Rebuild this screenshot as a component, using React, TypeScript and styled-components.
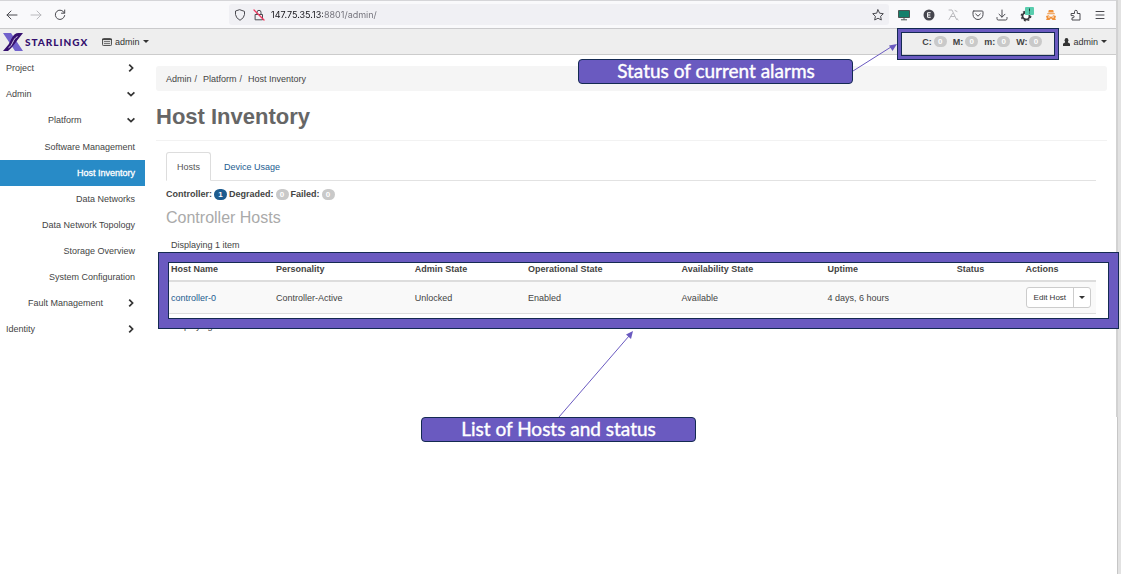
import React from "react";
import styled, { createGlobalStyle, css } from "styled-components";

const color = {
  purple: "#6a5ac0",
  navy: "#142a52",
  text: "#444",
  link: "#1d5c8f",
  active: "#288bc7",
};

const GlobalStyle = createGlobalStyle`
  *, *::before, *::after { box-sizing: border-box; }
  body {
    margin: 0;
    background: #fff;
    color: ${color.text};
    font: 9px/14px "Liberation Sans", Arial, sans-serif;
  }
  button, input { font: inherit; color: inherit; }
  button { cursor: pointer; }
  a { color: inherit; text-decoration: none; }
  ul, ol { list-style: none; margin: 0; padding: 0; }
  svg { display: block; }
`;

const Shell = styled.div`
  display: flex;
  min-height: 100vh;
`;

const BrowserWindow = styled.div`
  flex: 1;
  min-width: 0;
`;

const WindowEdge = styled.div`
  position: relative;
  width: 4px;
  background: #e2e2e2;
  border-left: 1px solid #c6c6c6;
`;

const EdgeShade = styled.div`
  position: absolute;
  top: 0;
  left: -2px;
  width: 2px;
  height: 417px;
  background: #d2d2d2;
`;

const BrowserBar = styled.div`
  display: flex;
  align-items: center;
  height: 29px;
  padding: 0 10px 0 5px;
  background: #f9f9fb;
  border-top: 1px solid #d5d5d8;
  border-bottom: 1px solid #cacacc;
`;

const NavButtons = styled.div`
  display: flex;
  gap: 10px;
  width: 224px;
`;

const IconButton = styled.button<{ $dim?: boolean }>`
  display: flex;
  align-items: center;
  justify-content: center;
  width: 14px;
  height: 16px;
  padding: 0;
  border: 0;
  background: none;
  color: ${(p) => (p.$dim ? "#b9b9bd" : "#4a4a50")};
`;

const AddressBar = styled.div`
  display: flex;
  flex: 1;
  align-items: center;
  gap: 5px;
  height: 21px;
  padding: 0 4px;
  background: #f0f0f4;
  border-radius: 3px;
  color: #4a4a50;
`;

const Address = styled.input`
  flex: 1;
  min-width: 0;
  padding: 0;
  border: 0;
  outline: 0;
  background: linear-gradient(90deg, #15141a 52px, #6f6e77 52px);
  background-clip: text;
  -webkit-background-clip: text;
  -webkit-text-fill-color: transparent;
  color: #2b2a33;
  font: 9px/14px Inter, sans-serif;
`;

const Extensions = styled.div`
  display: flex;
  justify-content: space-between;
  width: 210px;
  margin-left: 8px;
`;

const TopNav = styled.header`
  display: flex;
  align-items: center;
  height: 26px;
  padding: 0 10px 0 3px;
  background: #eee;
  border-bottom: 1px solid #ccc;
`;

const Brand = styled.a`
  display: flex;
  align-items: center;
  gap: 2px;
  width: 99px;
  color: #34106e;
  font: 900 10px/14px Lato, sans-serif;
  letter-spacing: 1px;
`;

const MenuButton = styled.button`
  display: flex;
  align-items: center;
  gap: 3px;
  padding: 0;
  border: 0;
  background: none;
  color: #333;
`;

const Caret = styled.span`
  border: 3px solid transparent;
  border-top-color: currentColor;
  border-bottom: 0;
`;

const Alarms = styled.div`
  position: relative;
  display: flex;
  align-items: center;
  gap: 6px;
  height: 24px;
  margin-left: auto;
  margin-right: 4px;
  padding: 0 17px 0 25px;
`;

const Counter = styled.span`
  display: flex;
  align-items: center;
  gap: 2px;
  font-weight: bold;
`;

const Badge = styled.span<{ $on?: boolean }>`
  min-width: 13px;
  height: 11px;
  border-radius: 6px;
  background: ${(p) => (p.$on ? color.link : "#c9c9c9")};
  color: #fff;
  font-size: 8px;
  font-weight: bold;
  line-height: 11px;
  text-align: center;
`;

const frame = css`
  position: absolute;
  z-index: 2;
  pointer-events: none;
  border: 1px solid ${color.navy};
`;

const AlarmFrame = styled.div`
  ${frame}
  inset: -2px 0 -6px;
  box-shadow: inset 0 0 0 3px ${color.purple}, inset 0 0 0 4px ${color.navy};
`;

const HostFrame = styled.div`
  ${frame}
  inset: -6px -23px -15px -8px;
  box-shadow: inset 0 0 0 9px ${color.purple}, inset 0 0 0 10px ${color.navy};
`;

const Callout = styled.div`
  position: absolute;
  z-index: 3;
  width: 275px;
  height: 25px;
  border: 1px solid ${color.navy};
  border-radius: 4px;
  background: ${color.purple};
  color: #fff;
  font: 19px/21px Lato, sans-serif;
  -webkit-text-stroke: 0.4px #fff;
  text-align: center;
  white-space: nowrap;
`;

const AlarmCallout = styled(Callout)`
  top: 29px;
  right: 206px;
`;

const HostCallout = styled(Callout)`
  top: 159px;
  left: 255px;
`;

const AlarmArrow = styled.svg`
  position: absolute;
  z-index: 3;
  top: 12px;
  right: 162px;
`;

const HostArrow = styled.svg`
  position: absolute;
  z-index: 3;
  top: 71px;
  left: 392px;
`;

const Body = styled.div`
  display: flex;
  align-items: flex-start;
`;

const Sidebar = styled.nav`
  width: 145px;
  flex: none;
`;

const Group = styled.button<{ $indent: number }>`
  display: flex;
  align-items: center;
  justify-content: space-between;
  width: 100%;
  height: 26px;
  padding: 0 10px 0 ${(p) => p.$indent}px;
  border: 0;
  background: none;
  text-align: left;
`;

const Leaves = styled.ul`
  padding-top: 1px;
`;

const Leaf = styled.a<{ $active?: boolean }>`
  display: block;
  padding: 0 10px;
  line-height: 26px;
  text-align: right;
  ${(p) =>
    p.$active &&
    css`
      background: ${color.active};
      color: #fff;
      -webkit-text-stroke: 0.3px #fff;
    `}
`;

const Main = styled.main`
  flex: 1;
  min-width: 0;
  padding: 11px 10px 0 11px;
`;

const Breadcrumb = styled.ol`
  display: flex;
  gap: 5px;
  padding: 0 10px;
  border-radius: 3px;
  background: #f5f5f5;
  line-height: 26px;
  height: 25px;

  li + li::before {
    content: "/";
    margin-left: -2px;
    margin-right: 6px;
  }
`;

const Title = styled.h1`
  margin: 0;
  padding-top: 2px;
  border-bottom: 1px solid #f2f2f2;
  color: #666;
  font-size: 22px;
  font-weight: bold;
  line-height: 47px;
`;

const Content = styled.section`
  padding: 11px 11px 0 10px;
`;

const Tabs = styled.div`
  display: flex;
  gap: 2px;
  border-bottom: 1px solid #e2e2e2;
`;

const Tab = styled.button<{ $active?: boolean }>`
  height: 29px;
  margin-bottom: -1px;
  padding: 0 10px;
  border: 1px solid transparent;
  border-radius: 3px 3px 0 0;
  background: none;
  color: ${color.link};
  ${(p) =>
    p.$active &&
    css`
      border-color: #ddd #ddd #fff;
      background: #fff;
      color: #555;
    `}
`;

const Summary = styled.div`
  display: flex;
  align-items: center;
  gap: 2px;
  height: 26px;
`;

const Subtitle = styled.h2`
  margin: 0;
  color: #aaa;
  font-size: 16px;
  font-weight: normal;
  line-height: 22px;
`;

const ItemCount = styled.p`
  margin: 9px 5px 6px;
`;

const TableArea = styled.div`
  position: relative;
`;

const HostTable = styled.table`
  width: 100%;
  border-spacing: 0;
  table-layout: fixed;

  th, td {
    padding: 0 5px;
    text-align: left;
    white-space: nowrap;
  }
  th {
    height: 24px;
    border-bottom: 2px solid #ddd;
    font-weight: bold;
  }
  td {
    height: 32px;
    border-bottom: 1px solid #ddd;
    background: #f9f9f9;
  }
  td a { color: ${color.link}; }
`;

const TableFooter = styled.p`
  margin: 5px 5px 0;
`;

const Split = styled.div`
  display: inline-flex;
  height: 21px;
  border: 1px solid #ccc;
  border-radius: 3px;
  background: #fff;
  color: #333;
`;

const SplitPart = styled.button`
  display: flex;
  align-items: center;
  padding: 0 6px;
  border: 0;
  background: none;
  font-size: 8px;

  & + & {
    padding: 0 5px;
    border-left: 1px solid #ccc;
  }
`;

const EditButton = styled(SplitPart)`
  padding: 0 7px;
`;

const MoreButton = styled(SplitPart)`
  padding: 0 5px;
  border-left: 1px solid #ccc;
`;

const Stroke = ({ children, size = 12 }: { children: React.ReactNode; size?: number }) => (
  <svg
    width={size}
    height={size}
    viewBox="0 0 12 12"
    fill="none"
    stroke="currentColor"
    strokeLinecap="round"
    strokeLinejoin="round"
    strokeWidth="1"
    aria-hidden="true"
  >
    {children}
  </svg>
);

const Chevron = ({ open }: { open: boolean }) => (
  <svg width="8" height="8" viewBox="0 0 8 8" fill="none" stroke="#333" strokeWidth="1.7" aria-hidden="true">
    <path d={open ? "M.6 2.3 4 5.6 7.4 2.3" : "M2.2.6 5.6 4 2.2 7.4"} />
  </svg>
);

const Logo = () => (
  <svg width="20" height="18" viewBox="0 0 20 18" aria-hidden="true">
    <path d="M0 0h8l12 18h-8z" fill="#7161cc" />
    <path d="M0 18 5.500 11.500C8 8 9.500 0 15.500 0H20l-5.300 6.800C11.500 11 9.500 14.500 5 18z" fill="#35106f" />
    <path d="M5.500 14.800C10 12.500 9.500 5.800 14.500 3.600" fill="none" stroke="#e7e1f5" strokeWidth=".9" />
  </svg>
);

const ListIcon = () => (
  <svg width="10" height="8" viewBox="0 0 10 8" aria-hidden="true">
    <rect x=".5" y=".5" width="9" height="7" rx=".8" fill="#ddd" stroke="#555" />
    <path d="M0 1.500h10" stroke="#444" />
    <path d="M2 3.500h6M2 5.500h6" stroke="#777" />
  </svg>
);

const UserIcon = () => (
  <svg width="7" height="8" viewBox="0 0 7 8" fill="#333" aria-hidden="true">
    <ellipse cx="3.500" cy="2.200" rx="1.900" ry="2.200" />
    <path d="M2.200 4h2.600l.2.500 1.500.8q.5.300.5 1V8H0V6.300q0-.7.5-1l1.500-.8z" />
  </svg>
);

const extensions: { name: string; icon: React.ReactNode; dim?: boolean }[] = [
  {
    name: "Remote screen",
    icon: (
      <svg width="12" height="12" viewBox="0 0 12 12">
        <path d="M.5 1.500h11v7H.5z" fill="#14806b" stroke="#4b5553" />
        <path d="M6 8.500v2M3 10.800h6" stroke="#4b5553" />
      </svg>
    ),
  },
  {
    name: "Account",
    icon: (
      <svg width="12" height="12" viewBox="0 0 12 12">
        <circle cx="6" cy="6" r="5.500" fill="#46464e" />
        <path d="M7.700 3.700H4.600v4.600h3.100M4.600 6h2.700" fill="none" stroke="#fff" />
      </svg>
    ),
  },
  {
    name: "Reader",
    dim: true,
    icon: <Stroke><path d="M2 1h3l4.500 9.500M5.500 4.500 2 10.500M3.500 7.500h4M8 1.500l2 1M10 9.500l1 1.500" /></Stroke>,
  },
  {
    name: "Pocket",
    icon: <Stroke><path d="M1.800 2h8.400q.8 0 .8.800V5.500a5 5 0 0 1-10 0V2.800q0-.8.8-.8zM3.700 5 6 7.200 8.300 5" /></Stroke>,
  },
  { name: "Downloads", icon: <Stroke><path d="M6 1v7M3 5.200l3 3 3-3M1 8.500v1.200q0 1.300 1.300 1.300h7.400Q11 11 11 9.700V8.500" /></Stroke> },
  {
    name: "Settings extension",
    icon: (
      <svg width="14" height="16" viewBox="0 0 14 16">
        <circle cx="6" cy="9" r="3.500" fill="#fff" stroke="#38383d" strokeWidth="1.800" />
        <circle cx="6" cy="9" r="4.800" fill="none" stroke="#38383d" strokeWidth="1.200" strokeDasharray="2 1.770" />
        <rect x="5" y="0" width="9" height="8" rx="1" fill="#59cdae" />
        <path d="M9.500 1.500v3M9.500 5.500v1" stroke="#1c493e" />
      </svg>
    ),
  },
  {
    name: "Fox extension",
    icon: (
      <svg width="12" height="12" viewBox="0 0 12 12">
        <path d="M3.800 1h4.400l.6 2.500H3.200zM2.200 4.200h7.600v1H2.200zM1 7l2.500-.8L6 8l2.500-1.800L11 7l-.8 2.500.8 1.500H7.500L6 9.300 4.500 11H1l.8-1.500z" fill="#f0913a" />
        <circle cx="4" cy="8" r=".8" fill="#fff" />
        <circle cx="8" cy="8" r=".8" fill="#fff" />
      </svg>
    ),
  },
  {
    name: "Extensions",
    icon: <Stroke><path d="M1.500 4.500h3V2.700a1.400 1.400 0 0 1 2.800 0v1.800H10v6.500H2V8.800h1a1.100 1.100 0 0 0 0-2.200H1.500z" /></Stroke>,
  },
  { name: "Menu", icon: <Stroke><path d="M2 2.500h8M2 6h8M2 9.500h8" /></Stroke> },
];

const Count = ({ label, value, on }: { label: string; value: number; on?: boolean }) => (
  <Counter>
    {label} <Badge $on={on}>{value}</Badge>
  </Counter>
);

const columns: [string, string][] = [
  ["Host Name", "11.3%"],
  ["Personality", "14.9%"],
  ["Admin State", "12.2%"],
  ["Operational State", "16.5%"],
  ["Availability State", "15.7%"],
  ["Uptime", "13.9%"],
  ["Status", "7.4%"],
  ["Actions", "8.1%"],
];

const leaves = [
  "Software Management",
  "Host Inventory",
  "Data Networks",
  "Data Network Topology",
  "Storage Overview",
  "System Configuration",
];

export default function App() {
  return (
    <>
      <GlobalStyle />
      <Shell>
        <BrowserWindow>
          <BrowserBar>
            <NavButtons>
              <IconButton aria-label="Back"><Stroke><path d="M1 6h10M5 2 1 6l4 4" /></Stroke></IconButton>
              <IconButton aria-label="Forward" $dim><Stroke><path d="M1 6h10M7 2l4 4-4 4" /></Stroke></IconButton>
              <IconButton aria-label="Reload"><Stroke><path d="M10.400 4A4.700 4.700 0 1 0 10.700 6.500M10.700 1v3.200H7.500" /></Stroke></IconButton>
            </NavButtons>
            <AddressBar>
              <IconButton aria-label="Tracking protection">
                <Stroke><path d="M6 .8 10.500 2.400V5.500Q10.200 9 6 11.300 1.800 9 1.500 5.500V2.400z" /></Stroke>
              </IconButton>
              <IconButton aria-label="Connection not secure">
                <Stroke>
                  <path d="M2.500 5.500h7v5.300h-7zM4 5.500V3.300a2 2 0 0 1 4 0v2.200" />
                  <path d="m1 1 10 10" stroke="#f0385f" strokeWidth="1.300" />
                </Stroke>
              </IconButton>
              <Address aria-label="Address" defaultValue="147.75.35.13:8801/admin/" />
              <IconButton aria-label="Bookmark">
                <Stroke><path d="m6 .8 1.600 3.400 3.700.5-2.700 2.600.7 3.700L6 9.200 2.700 11l.7-3.700L.7 4.700l3.700-.5z" /></Stroke>
              </IconButton>
            </AddressBar>
            <Extensions>
              {extensions.map((e) => (
                <IconButton key={e.name} aria-label={e.name} $dim={e.dim}>{e.icon}</IconButton>
              ))}
            </Extensions>
          </BrowserBar>

          <TopNav>
            <Brand href="#"><Logo />STARLINGX</Brand>
            <MenuButton><ListIcon />admin<Caret /></MenuButton>
            <Alarms>
              <Count label="C:" value={0} />
              <Count label="M:" value={0} />
              <Count label="m:" value={0} />
              <Count label="W:" value={0} />
              <AlarmFrame />
              <AlarmCallout>Status of current alarms</AlarmCallout>
              <AlarmArrow width="44" height="32" viewBox="0 0 44 32" aria-hidden="true">
                <path d="M0 29 38 5" stroke={color.purple} strokeWidth="1" />
                <path d="m44 2-4.500 7-3.500-5.500z" fill={color.purple} />
              </AlarmArrow>
            </Alarms>
            <MenuButton><UserIcon />admin<Caret /></MenuButton>
          </TopNav>

          <Body>
            <Sidebar>
              <Group $indent={6}>Project<Chevron open={false} /></Group>
              <Group $indent={6}>Admin<Chevron open /></Group>
              <Group $indent={48}>Platform<Chevron open /></Group>
              <Leaves>
                {leaves.map((leaf) => (
                  <li key={leaf}>
                    <Leaf href="#" $active={leaf === "Host Inventory"}>{leaf}</Leaf>
                  </li>
                ))}
              </Leaves>
              <Group $indent={28}>Fault Management<Chevron open={false} /></Group>
              <Group $indent={6}>Identity<Chevron open={false} /></Group>
            </Sidebar>

            <Main>
              <Breadcrumb>
                <li><a href="#">Admin</a></li>
                <li><a href="#">Platform</a></li>
                <li>Host Inventory</li>
              </Breadcrumb>
              <Title>Host Inventory</Title>
              <Content>
                <Tabs role="tablist">
                  <Tab role="tab" aria-selected="true" $active>Hosts</Tab>
                  <Tab role="tab" aria-selected="false">Device Usage</Tab>
                </Tabs>
                <Summary>
                  <Count label="Controller:" value={1} on />
                  <Count label="Degraded:" value={0} />
                  <Count label="Failed:" value={0} />
                </Summary>
                <Subtitle>Controller Hosts</Subtitle>
                <ItemCount>Displaying 1 item</ItemCount>
                <TableArea>
                  <HostTable>
                    <colgroup>
                      {columns.map(([name, width]) => <col key={name} width={width} />)}
                    </colgroup>
                    <thead>
                      <tr>{columns.map(([name]) => <th key={name} scope="col">{name}</th>)}</tr>
                    </thead>
                    <tbody>
                      <tr>
                        <td><a href="#">controller-0</a></td>
                        <td>Controller-Active</td>
                        <td>Unlocked</td>
                        <td>Enabled</td>
                        <td>Available</td>
                        <td>4 days, 6 hours</td>
                        <td />
                        <td>
                          <Split>
                            <EditButton>Edit Host</EditButton>
                            <MoreButton aria-label="More actions"><Caret /></MoreButton>
                          </Split>
                        </td>
                      </tr>
                    </tbody>
                  </HostTable>
                  <HostFrame />
                  <HostCallout>List of Hosts and status</HostCallout>
                  <HostArrow width="78" height="88" viewBox="0 0 78 88" aria-hidden="true">
                    <path d="M1 88 71 7" stroke={color.purple} strokeWidth="1" />
                    <path d="m75 2-2 8-5-4.500z" fill={color.purple} />
                  </HostArrow>
                </TableArea>
                <TableFooter>Displaying 1 item</TableFooter>
              </Content>
            </Main>
          </Body>
        </BrowserWindow>
        <WindowEdge><EdgeShade /></WindowEdge>
      </Shell>
    </>
  );
}
